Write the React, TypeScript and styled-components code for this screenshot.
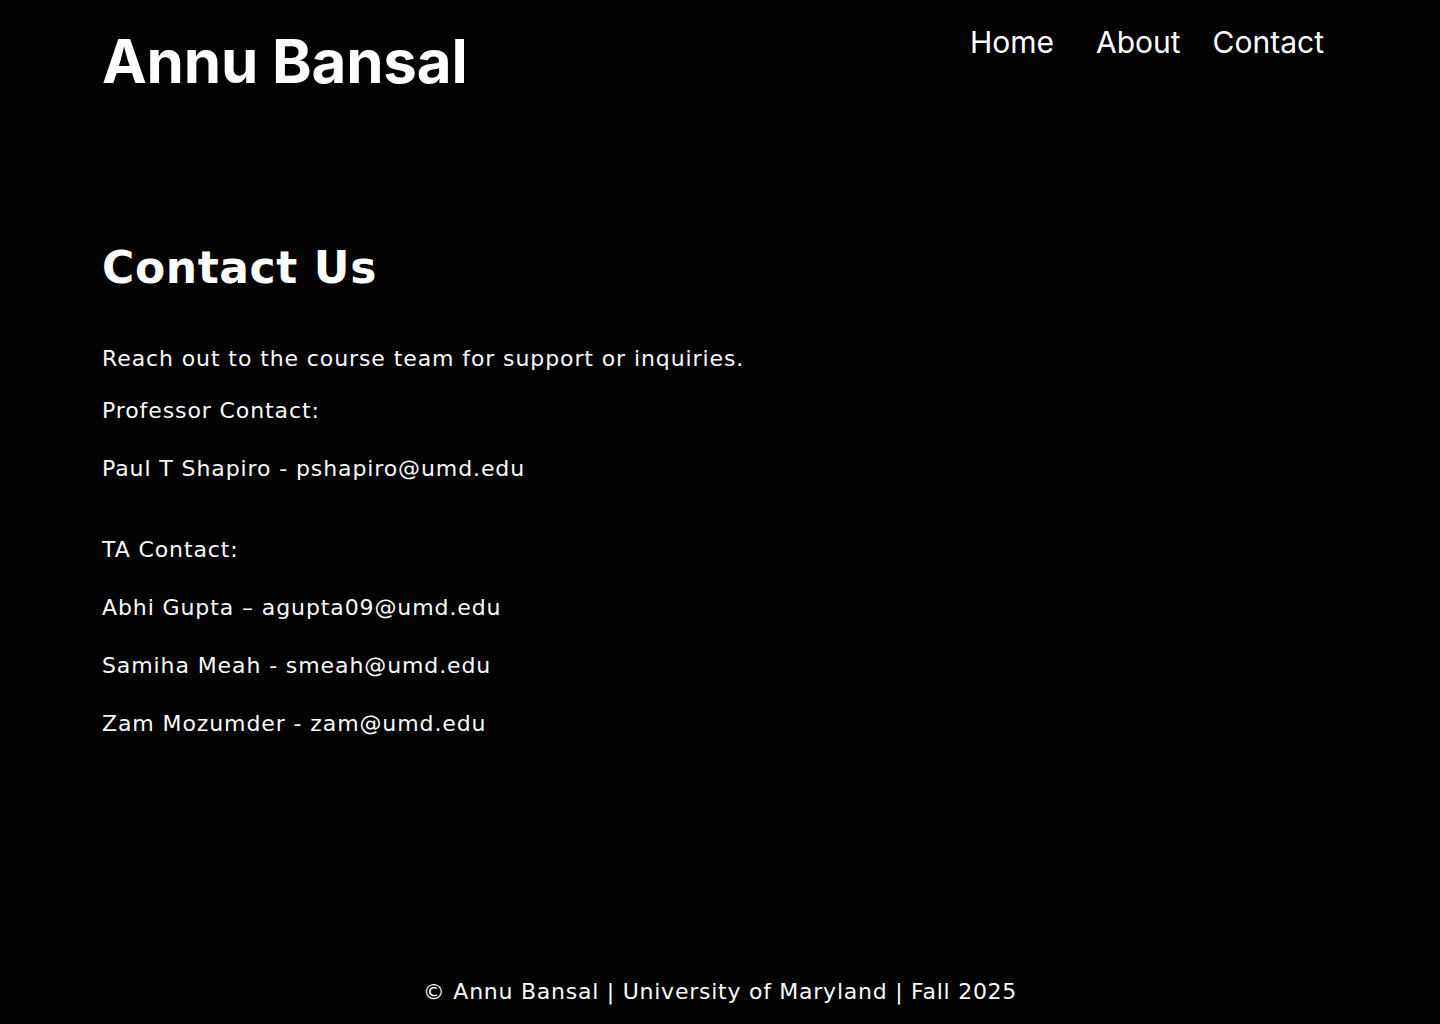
import React from "react";
import styled, { createGlobalStyle } from "styled-components";

const Global = createGlobalStyle`
  html, body { margin: 0; padding: 0; background: #030303; }
  body { font-family: "DejaVu Sans", "Liberation Sans", sans-serif; color: #fafafa; }
  * { box-sizing: border-box; }
`;

const Page = styled.div`
  min-height: 100vh;
  display: flex;
  flex-direction: column;
  background: #030303;
`;

const Header = styled.header`
  display: flex;
  justify-content: space-between;
  align-items: flex-start;
  padding: 24px 116px 0 102px;
`;

const Brand = styled.h1`
  margin: 2px 0 0;
  font-family: Inter, "Liberation Sans", sans-serif;
  font-weight: 700;
  font-size: 60px;
  line-height: 70px;
  letter-spacing: -0.2px;
  color: #ffffff;
`;

const Nav = styled.nav`
  display: flex;
  align-items: center;
`;

const NavLink = styled.a<{ $gap?: number }>`
  margin-left: ${(p) => p.$gap ?? 0}px;
  font-family: Inter, "Liberation Sans", sans-serif;
  font-size: 30px;
  line-height: 36px;
  color: #ffffff;
  text-decoration: none;
  cursor: pointer;
`;

const Main = styled.main`
  display: flex;
  flex-direction: column;
  align-items: flex-start;
  padding: 143px 102px 0;
`;

const Title = styled.h2`
  margin: 0 0 47px;
  font-family: "DejaVu Sans", "Liberation Sans", sans-serif;
  font-weight: 700;
  font-size: 44px;
  line-height: 58px;
  letter-spacing: 0.6px;
  color: #ffffff;
`;

const Line = styled.p<{ $top?: number }>`
  margin: ${(p) => p.$top ?? 0}px 0 0;
  font-size: 22px;
  line-height: 30px;
  letter-spacing: 0.9px;
  color: #fafafa;
`;

const Footer = styled.footer`
  margin-top: auto;
  padding: 0 0 17px;
  text-align: center;
  font-size: 22px;
  line-height: 30px;
  letter-spacing: 0.75px;
  color: #fafafa;
`;

export default function App() {
  return (
    <Page>
      <Global />
      <Header>
        <Brand>Annu Bansal</Brand>
        <Nav>
          <NavLink>Home</NavLink>
          <NavLink $gap={42}>About</NavLink>
          <NavLink $gap={32}>Contact</NavLink>
        </Nav>
      </Header>
      <Main>
        <Title>Contact Us</Title>
        <Line>Reach out to the course team for support or inquiries.</Line>
        <Line $top={22}>Professor Contact:</Line>
        <Line $top={28}>Paul T Shapiro - pshapiro@umd.edu</Line>
        <Line $top={51}>TA Contact:</Line>
        <Line $top={28}>Abhi Gupta – agupta09@umd.edu</Line>
        <Line $top={28}>Samiha Meah - smeah@umd.edu</Line>
        <Line $top={28}>Zam Mozumder - zam@umd.edu</Line>
      </Main>
      <Footer>© Annu Bansal | University of Maryland | Fall 2025</Footer>
    </Page>
  );
}
